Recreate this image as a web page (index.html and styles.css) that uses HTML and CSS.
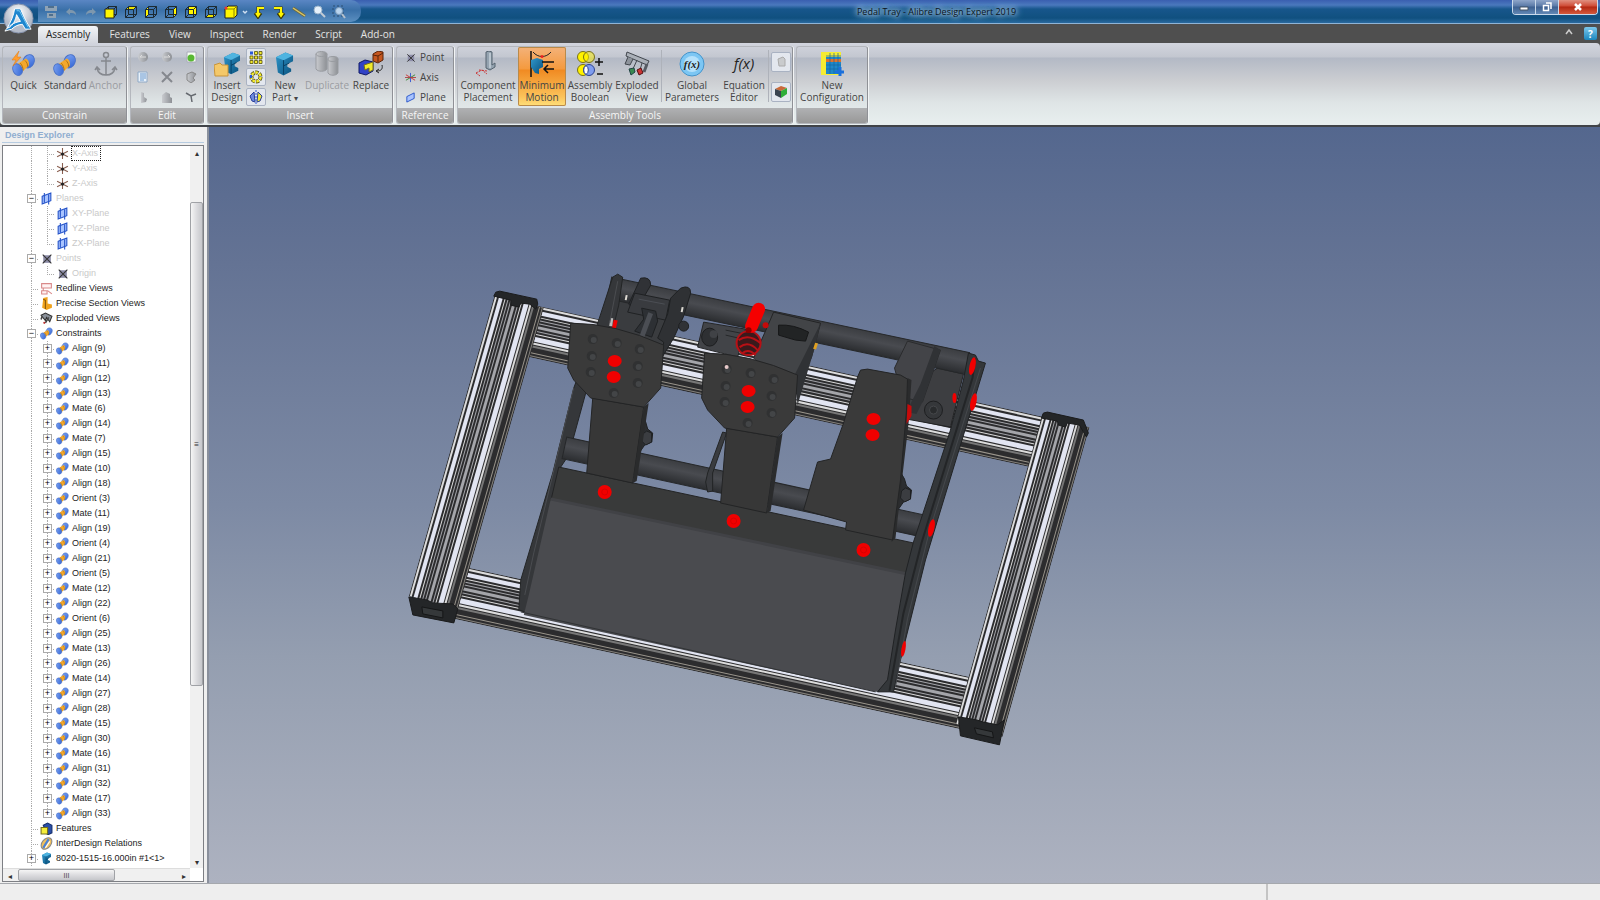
FILE: index.html
```html
<!DOCTYPE html>
<html lang="en">
<head>
  <meta charset="UTF-8" />
  <meta name="viewport" content="width=device-width, initial-scale=1.0" />
  <title>Pedal Tray - Alibre Design Expert 2019</title>
  <link rel="stylesheet" href="styles.css">
</head>
<body>
  <!-- shared icons -->
  <svg class="sprite" aria-hidden="true">
    <defs>
      <linearGradient id="grey" x1="0" y1="0" x2="1" y2="0"><stop offset="0" stop-color="#c9cbcf"/><stop offset="1" stop-color="#8d9095"/></linearGradient>
      <linearGradient id="blueDisc" x1="0" y1="0" x2="1" y2="1"><stop offset="0" stop-color="#7fa6f5"/><stop offset="1" stop-color="#2f62d2"/></linearGradient>
      <linearGradient id="steel" x1="0" y1="0" x2="1" y2="1"><stop offset="0" stop-color="#2f97cc"/><stop offset="1" stop-color="#09507c"/></linearGradient>
    </defs>
    <symbol id="cube" viewBox="0 0 14 14"><path d="M1.5 4.5h8v8h-8zM4.500 1.500h8v8h-8zM1.500 4.500l3-3M9.500 4.500l3-3M9.500 12.500l3-3M1.500 12.500l3-3" fill="none" stroke="#1c2a33"/></symbol>
    <symbol id="spool" viewBox="0 0 26 26">
      <ellipse cx="18" cy="9" rx="6" ry="7.500" fill="url(#blueDisc)" stroke="#4a72c8" transform="rotate(25 18 9)"/>
      <path d="M6 12l9-6c3 1 4 5 3 8l-8 7c-3 0-5-5-4-9z" fill="#f3a82c"/><path d="M9 11c2 2 3 5 3 8M14 8c2 2 3 4 3 7" stroke="#a96e12" fill="none"/>
      <ellipse cx="6" cy="18" rx="5" ry="6.500" fill="url(#blueDisc)" stroke="#4a72c8" transform="rotate(-25 6 18)"/>
    </symbol>
    <symbol id="bracket" viewBox="0 0 20 26"><path d="M1 6l10-5 8 3v6l-6 3v3l4 2v3l-8 4-6-3z" fill="url(#steel)"/><path d="M1 6l8 3 10-5-8-3z" fill="#4fb4e0"/><path d="M9 9v15M9 15l6-3" stroke="#063e63" fill="none"/></symbol>
    <symbol id="axis" viewBox="0 0 12 12"><path d="M6 1v10M1 4l10 5M1 9l10-5" stroke="#8a5f50" fill="none"/><circle cx="6" cy="6.500" r="1.500" fill="#222"/></symbol>
    <symbol id="plane" viewBox="0 0 12 12"><path d="M2 4l8-3v7l-8 3z" fill="#a9c4ff" stroke="#2452c8"/><path d="M4 1v9M8 2v9.500" stroke="#2452c8"/></symbol>
    <symbol id="point" viewBox="0 0 12 12"><rect x="3" y="3" width="7" height="7" fill="#8c8ca8"/><path d="M2.500 2.500l8 8M10.500 2.500l-8 8" stroke="#333"/></symbol>
    <symbol id="redline" viewBox="0 0 12 12"><path d="M1.500 1.500h9v4h-9zM3 5.500v3M1.500 8h5v3h-5zM7 8l4 3" fill="#fff3f3" stroke="#d98a8a"/></symbol>
    <symbol id="section" viewBox="0 0 12 12"><path d="M3 1l4-1v6l4 1v3l-5 2-4-2z" fill="#f0a31d"/><path d="M3 2l2 1v8" stroke="#8a5a0a" fill="none"/></symbol>
    <symbol id="explode" viewBox="0 0 12 12"><path d="M1 3l4-2 6 3-2 5-3-4-1 3z" fill="#8a9099" stroke="#333"/><path d="M2 4l-1 3M8 5l-3 5" stroke="#444" stroke-width="1.500"/><circle cx="4" cy="10" r="1" fill="#b33"/></symbol>
    <symbol id="feat" viewBox="0 0 12 12"><path d="M3 3l4-2 4 2v7l-4 2z" fill="#2a4fa8" stroke="#16306e"/><path d="M1 5h6v6H1z" fill="#f5ee3a" stroke="#77701a"/></symbol>
    <symbol id="inter" viewBox="0 0 12 12"><ellipse cx="6" cy="6" rx="6" ry="4" transform="rotate(-50 6 6)" fill="#f2c05a" stroke="#888"/><path d="M3 10L8 2" stroke="#4a82d8" stroke-width="2"/><path d="M5 10l4-6" stroke="#fff"/></symbol>
  </svg>

  <header class="titlebar">
    <div class="quick-access">
      <button aria-label="Save"><svg viewBox="0 0 14 14"><path d="M1 1h12v5H1zM3 8h9v5H3z" fill="#8fa3b5"/><path d="M4 2h6M5 10h4" stroke="#4e6f8e" stroke-width="2"/></svg></button>
      <button aria-label="Undo"><svg viewBox="0 0 14 14"><path d="M2 7l4-4v2c4 0 6 2 6 5-2-2-3-2-6-2v2z" fill="#7d97ae"/></svg></button>
      <button aria-label="Redo"><svg viewBox="0 0 14 14"><path d="M12 7L8 3v2c-4 0-6 2-6 5 2-2 3-2 6-2v2z" fill="#7d97ae"/></svg></button>
      <button aria-label="Front"><svg viewBox="0 0 14 14"><use href="#cube"/><path d="M1 4h9v9H1z" fill="#fff600" stroke="#222"/></svg></button>
      <button aria-label="Top"><svg viewBox="0 0 14 14"><path d="M1.500 4.500l3-3h8l-3 3z" fill="#e9e200"/><use href="#cube"/></svg></button>
      <button aria-label="Left"><svg viewBox="0 0 14 14"><path d="M1.500 4.500l3-3v8l-3 3z" fill="#fff600"/><use href="#cube"/></svg></button>
      <button aria-label="Right"><svg viewBox="0 0 14 14"><path d="M9.500 4.500l3-3v8l-3 3z" fill="#fff600"/><use href="#cube"/></svg></button>
      <button aria-label="Back"><svg viewBox="0 0 14 14"><path d="M4.500 1.500h8v8h-8z" fill="#fff600"/><use href="#cube"/></svg></button>
      <button aria-label="Bottom"><svg viewBox="0 0 14 14"><path d="M1.500 12.500l3-3h8l-3 3z" fill="#e9e200"/><use href="#cube"/></svg></button>
      <button aria-label="Isometric"><svg viewBox="0 0 14 14"><path d="M1 4l3-3h9v9l-3 3H1z" fill="#fff600" stroke="#222"/><path d="M1 4h9v9M10 4l3-3" stroke="#8a8500" fill="none"/><circle cx="2" cy="3" r="1.500" fill="#e33"/></svg></button>
      <button class="tiny" aria-label="More views"><svg viewBox="0 0 8 14"><path d="M2 6l2 2 2-2" stroke="#cfe0f2" fill="none" stroke-width="1.500"/></svg></button>
      <button aria-label="Previous view"><svg viewBox="0 0 14 14"><path d="M12 3H6v7M3 8l3 4 3-4" stroke="#3a3600" stroke-width="3" fill="none"/><path d="M12 3H6v7M4 8l2 3 2-3" stroke="#fff600" stroke-width="2" fill="none"/></svg></button>
      <button aria-label="Next view"><svg viewBox="0 0 14 14"><path d="M2 3h7v7M6 8l3 4 3-4" stroke="#3a3600" stroke-width="3" fill="none"/><path d="M2 3h7v7M7 8l2 3 2-3" stroke="#fff600" stroke-width="2" fill="none"/></svg></button>
      <button aria-label="Measure"><svg viewBox="0 0 14 14"><path d="M1 3l12 8" stroke="#6f6a3a" stroke-width="3"/><path d="M1 3l12 8" stroke="#d9c66a" stroke-width="1.500"/></svg></button>
      <button aria-label="Zoom"><svg viewBox="0 0 14 14"><circle cx="6" cy="5" r="4" fill="#e6f1fb" stroke="#9ab3ca"/><path d="M9 8l4 4" stroke="#c3cbd4" stroke-width="2"/></svg></button>
      <button aria-label="Zoom to window"><svg viewBox="0 0 14 14"><path d="M1 1h10v10H1z" stroke="#2c4f70" stroke-dasharray="2" fill="none"/><circle cx="7" cy="6" r="3.500" fill="#b9d4ee" stroke="#7f9fbe"/><path d="M10 9l3 4" stroke="#b5c0cb" stroke-width="2"/></svg></button>
    </div>
    <div class="title">Pedal Tray - Alibre Design Expert 2019</div>
    <div class="window-buttons">
      <button aria-label="Minimize"><svg viewBox="0 0 12 12"><path d="M2 6h8v3H2z" fill="#fff" stroke="#456"/></svg></button>
      <button aria-label="Restore"><svg viewBox="0 0 12 12"><path d="M5 2h5v6M2.500 4.500h5v5h-5z" fill="none" stroke="#fff" stroke-width="1.500"/></svg></button>
      <button class="close" aria-label="Close"><svg viewBox="0 0 12 12"><path d="M3 3l6 6M9 3L3 9" stroke="#fff" stroke-width="2.500"/></svg></button>
    </div>
    <button class="app-button" aria-label="Application menu"><svg viewBox="0 0 32 32">
      <defs><radialGradient id="orb" cy=".3"><stop offset="0" stop-color="#fff"/><stop offset="1" stop-color="#b4bbc9"/></radialGradient></defs>
      <circle cx="16" cy="16" r="15" fill="url(#orb)" stroke="#8592ab"/>
      <path d="M12 6h6c3 7 6 14 11 21h-6l-3-5c-4 0-8 2-11 5l-7 2c3-5 9-9 16-10L14 12c-1 6-4 11-7 13l-3 1c4-6 7-13 8-20z" fill="#1e86cf" stroke="#fff" stroke-width="1"/>
      <path d="M14 8h3l9 17" stroke="#7ccaf2" fill="none"/>
    </svg></button>
  </header>

  <nav class="tabs">
    <button class="active">Assembly</button>
    <button>Features</button>
    <button>View</button>
    <button>Inspect</button>
    <button>Render</button>
    <button>Script</button>
    <button>Add-on</button>
    <span class="spacer"></span>
    <button class="collapse" aria-label="Collapse ribbon"><svg viewBox="0 0 12 12"><path d="M3 8l3-4 3 4" stroke="#ccc" stroke-width="1.500" fill="none"/></svg></button>
    <button class="help" aria-label="Help">?</button>
  </nav>

  <div class="ribbon">
    <section class="group constrain">
      <div class="tools">
        <button class="tool"><svg viewBox="0 0 26 26"><use href="#spool" y="2" width="26" height="24"/><path d="M8 0L1 9h4l-3 6 8-9H6z" fill="#ff9d2e" stroke="#e07a10" stroke-width=".5"/></svg>Quick</button>
        <button class="tool"><svg viewBox="0 0 26 26"><use href="#spool" y="2" width="26" height="24"/></svg>Standard</button>
        <button class="tool off"><svg viewBox="0 0 26 26"><circle cx="13" cy="4" r="2.500" fill="none" stroke="#85888e" stroke-width="1.500"/><path d="M13 6v18M8 10h10M4 17c1 5 5 7 9 7s8-2 9-7M2 19l2-3 3 3M19 19l3-3 2 3" stroke="#85888e" stroke-width="1.500" fill="none"/></svg>Anchor</button>
      </div>
      <h2>Constrain</h2>
    </section>

    <section class="group">
      <div class="tools edit-grid">
        <button aria-label="Undo"><svg viewBox="0 0 12 12"><circle cx="6" cy="6" r="5" fill="url(#grey)"/><path d="M3 6h6M3 6l2-2" stroke="#ddd" fill="none"/></svg></button>
        <button aria-label="Redo"><svg viewBox="0 0 12 12"><circle cx="6" cy="6" r="5" fill="url(#grey)"/><path d="M3 6h6M9 6L7 4" stroke="#ddd" fill="none"/></svg></button>
        <button aria-label="Regenerate"><svg viewBox="0 0 12 12"><path d="M2 1h9v10H2z" fill="#f5fff0" stroke="#aab"/><circle cx="6" cy="7" r="3.500" fill="#58b832"/></svg></button>
        <button aria-label="Properties"><svg viewBox="0 0 12 12"><path d="M1 1h9v10H1z" fill="#e9f2fb" stroke="#8fa9c6"/><path d="M3 3h6M3 5h6M3 7h6M3 9h4" stroke="#6a98cc"/></svg></button>
        <button aria-label="Delete"><svg viewBox="0 0 12 12"><path d="M1 1l10 10M11 1L1 11" stroke="#85888e" stroke-width="2"/></svg></button>
        <button aria-label="Edit part"><svg viewBox="0 0 12 12"><path d="M2 3l5-2 4 2-3 4 2 2-4 3-4-3z" fill="url(#grey)" stroke="#888"/></svg></button>
        <button aria-label="Suppress"><svg viewBox="0 0 12 12"><path d="M4 1l3 1v4l3 2-1 3-5 1z" fill="url(#grey)"/></svg></button>
        <button aria-label="Copy"><svg viewBox="0 0 12 12"><path d="M1 4l4-3 4 2v3l2 1v5H1z" fill="url(#grey)"/></svg></button>
        <button aria-label="Branch"><svg viewBox="0 0 12 12"><path d="M1 2l5 3 5-2M6 5l1 6" stroke="#666a70" fill="none" stroke-width="1.500"/></svg></button>
      </div>
      <h2>Edit</h2>
    </section>

    <section class="group insert">
      <div class="tools">
        <button class="tool"><svg viewBox="0 0 26 26"><use href="#bracket" x="9" y="0" width="18" height="25"/><path d="M0 14l6-2 2 2h6v11H1z" fill="#f4c869" stroke="#c8943a"/></svg>Insert<br>Design</button>
        <div class="stack">
          <button aria-label="Linear pattern"><svg viewBox="0 0 14 14"><g fill="#f3ea2e" stroke="#55500f" stroke-width=".8"><path d="M5.500 1.500h3v3h-3zM10 1.500h3v3h-3zM1 6h3v3H1zM5.500 6h3v3h-3zM10 6h3v3h-3zM1 10.500h3v3H1zM5.500 10.500h3v3h-3zM10 10.500h3v3h-3z"/></g><path d="M1 1.500h3v3H1z" fill="#2a57d8"/></svg></button>
          <button aria-label="Circular pattern"><svg viewBox="0 0 14 14"><circle cx="7" cy="7" r="4.500" stroke="#55500f" stroke-width="4" stroke-dasharray="3 1" fill="none"/><circle cx="7" cy="7" r="4.500" stroke="#f3ea2e" stroke-width="2.500" stroke-dasharray="2.500 1.500" fill="none"/><path d="M1 5h2v3H1z" fill="#2a57d8"/></svg></button>
          <button aria-label="Mirror"><svg viewBox="0 0 14 14"><path d="M5 2L1 6l2 5 3 1z" fill="#6d8be0" stroke="#2a3f96"/><path d="M9 2l4 4-2 5-3 1z" fill="#f3ea2e" stroke="#2a3f96"/><path d="M7 0v14" stroke="#2a57d8" stroke-dasharray="2 1"/></svg></button>
        </div>
        <button class="tool"><svg viewBox="0 0 26 26"><use href="#bracket" x="3" width="19" height="26"/></svg>New<br>Part <i>▾</i></button>
        <button class="tool duplicate off"><svg viewBox="0 0 26 26"><g fill="url(#grey)" stroke="#999ca1"><path d="M2 3v15c2 3 9 3 11 0V3z"/><ellipse cx="7.500" cy="3" rx="5.500" ry="2.500"/><path d="M14 8v14c2 3 8 3 10 0V8z"/><ellipse cx="19" cy="8" rx="5" ry="2.500"/></g></svg>Duplicate</button>
        <button class="tool replace"><svg viewBox="0 0 26 26"><path d="M15 3l5-3 5 1v8l-5 3-5-2z" fill="#c4561f" stroke="#5a240a"/><path d="M15 4l5 1 5-3M20 5v6" stroke="#5a240a" fill="none"/><path d="M1 12l6-3 8 2v9l-7 4-7-2z" fill="#3142c6" stroke="#111a66"/><path d="M6 14l9-3v8l-4 2v-4l-4 2z" fill="#f1ea2c" stroke="#77701a"/><path d="M24 14c1 4-1 6-5 6m2-2l-3 2 3 2" stroke="#222" fill="none"/></svg>Replace</button>
      </div>
      <h2>Insert</h2>
    </section>

    <section class="group reference">
      <div class="tools rows">
        <button><svg viewBox="0 0 12 12"><use href="#point"/></svg>Point</button>
        <button><svg viewBox="0 0 12 12"><path d="M6 1v10" stroke="#3456d0"/><path d="M1 3l10 6" stroke="#c33"/><path d="M1 9l10-6" stroke="#383"/><path d="M0 6h12" stroke="#a44"/></svg>Axis</button>
        <button><svg viewBox="0 0 12 12"><path d="M2 5l8-4v6l-8 4z" fill="#a9c4ff" stroke="#2452c8"/></svg>Plane</button>
      </div>
      <h2>Reference</h2>
    </section>

    <section class="group assembly">
      <div class="tools">
        <button class="tool wide"><svg viewBox="0 0 26 26"><path d="M11 1l3-1 3 1v13l3-2v4l-5 3-4-2z" fill="#94a3b0" stroke="#55636f"/><path d="M15 2v15" stroke="#dfe7ee"/><path d="M1 22l6-3 5 4M5 25l-4-3M4 19l8 1" stroke="#c33" fill="none" stroke-dasharray="2 1"/></svg>Component<br>Placement</button>
        <button class="tool active" aria-pressed="true"><svg viewBox="0 0 26 26"><path d="M2 0v26" stroke="#111" stroke-width="1.500"/><path d="M4 1c5 6 13 6 18 0" stroke="#222" fill="none"/><circle cx="13" cy="5.500" r="1.500" fill="#e22"/><path d="M2 9l6-2 6 2v7l-4 2v5l-4-1-4-6z" fill="url(#steel)"/><path d="M13 11h12M15 18h10M19 14l-4 4 4 4" stroke="#111" stroke-width="1.500" fill="none"/></svg>Minimum<br>Motion</button>
        <button class="tool"><svg viewBox="0 0 26 26"><g stroke="#77701a" fill="#fff200"><circle cx="6" cy="6" r="5.500"/><circle cx="12" cy="6" r="5.500" fill-opacity=".5"/><circle cx="6" cy="19" r="5.500"/></g><circle cx="12" cy="19" r="5.500" fill="#7f9df0" stroke="#2c4390"/><path d="M9 14.500a5.500 5.500 0 0 1 0 9 5.500 5.500 0 0 1 0-9" fill="#fff" stroke="#2c4390"/><path d="M22 7v8M18 11h8M20 23h6" stroke="#111" stroke-width="1.500"/></svg>Assembly<br>Boolean</button>
        <button class="tool exploded"><svg viewBox="0 0 26 26"><path d="M3 1l22 9-2 4L2 5z" fill="#aab0b8" stroke="#41464d"/><path d="M4 6l-3 7 5 1 3-6M13 9l-4 9M18 12l-2 7" stroke="#41464d" fill="#8d939b"/><path d="M23 13l-3 8" stroke="#565b63" stroke-width="3"/><path d="M5 18l5-1 1 4-4 3z" fill="#3a8a50" stroke="#244"/><path d="M13 19l4-2 2 5-4 2z" fill="#c33" stroke="#511"/></svg>Exploded<br>View</button>
        <span class="divider"></span>
        <button class="tool global"><svg viewBox="0 0 26 26"><circle cx="13" cy="13" r="12" fill="#7cc6f3" stroke="#4593c9"/><circle cx="13" cy="13" r="8" fill="#b5e1fb"/><text x="13" y="17" class="fx-small">f(x)</text></svg>Global<br>Parameters</button>
        <button class="tool equation"><svg viewBox="0 0 26 26"><text x="13" y="18" class="fx">f(x)</text></svg>Equation<br>Editor</button>
        <span class="divider"></span>
        <div class="stack two">
          <button aria-label="Compare"><svg viewBox="0 0 14 14"><path d="M4 4l5-2 2 2v7H5z" fill="#c9cbcd" stroke="#aaa"/></svg></button>
          <button aria-label="Interference"><svg viewBox="0 0 14 14"><path d="M1 4l6-3 6 2-6 3z" fill="#c96a3a"/><path d="M1 4l6 2v7l-6-3z" fill="#3a4450"/><path d="M7 6l6-3v6l-6 4z" fill="#2fae3a"/></svg></button>
        </div>
      </div>
      <h2>Assembly Tools</h2>
    </section>

    <section class="group config">
      <div class="tools">
        <button class="tool"><svg viewBox="0 0 26 26"><path d="M2 1h20v23H2z" fill="#f6ec32"/><path d="M7 6h15v17H7z" fill="#1e88c9"/><path d="M7 8h15v3H7z" fill="#e0722c"/><path d="M7 14h15M7 18h15M11 2v21M15 2v21M19 2v21M7 5h15" stroke="#1565a0" stroke-width=".7"/><path d="M21 16v9M16 21h9" stroke="#1a70dc" stroke-width="3"/></svg>New<br>Configuration</button>
      </div>
      <h2>&nbsp;</h2>
    </section>
  </div>

  <main>
    <aside>
      <h1>Design Explorer</h1>
      <div class="explorer">
        <div class="tree" id="tree"></div>
        <div class="vscroll">
          <button aria-label="Scroll up">▴</button>
          <span class="vthumb">≡</span>
          <button aria-label="Scroll down">▾</button>
        </div>
        <div class="hscroll">
          <button aria-label="Scroll left">◂</button>
          <span class="hthumb">III</span>
          <button aria-label="Scroll right">▸</button>
        </div>
      </div>
    </aside>

    <div class="viewport">
      <svg viewBox="208 127 1392 756" role="img" aria-label="Pedal tray assembly">
        <defs>
          <linearGradient id="tube" x1="0" y1="0" x2="0" y2="1"><stop offset="0" stop-color="#3b3d41"/><stop offset=".4" stop-color="#494b50"/><stop offset="1" stop-color="#2b2d30"/></linearGradient>
          <g id="hole"><ellipse rx="5" ry="5" fill="#303132"/><ellipse cx="1" cy="1" rx="3" ry="3" fill="#434547"/></g>
          <g id="pad">
            <path d="M592 398l51 9-11 76-46-10z" fill="#373737" stroke="#232425"/>
            <path d="M643 407l5-4-12 78-4 2z" fill="#2a2b2c"/>
            <path d="M570 323q44 0 93 22l-3 43-17 19-53-9-17-18-6-12z" fill="#3a3a3a" stroke="#232425"/>
            <use href="#hole" x="592" y="339"/><use href="#hole" x="616" y="343"/><use href="#hole" x="639" y="349"/>
            <use href="#hole" x="591" y="356"/><use href="#hole" x="637" y="366"/><use href="#hole" x="590" y="372"/>
            <use href="#hole" x="637" y="383"/><use href="#hole" x="613" y="393"/>
            <ellipse cx="614" cy="361" rx="7" ry="6" fill="#f00000"/><ellipse cx="613" cy="377" rx="7" ry="6" fill="#f00000"/>
          </g>
          <g id="knob" fill="#2c2e31" stroke="#1e2022"><path d="M-4-22l4 7 2 7 5 4-1 9-7 3-7 10-2-14z"/><path d="M1-6l5 2 0 9-6 3-4-4 1-7z" fill="#3b3d41"/></g>
        </defs>
        <!-- extrusion profile: light face, then the shaded side -->
        <symbol id="rail" viewBox="0 0 52 100" preserveAspectRatio="none">
          <rect width="52" height="100" fill="#2c2c2e"/>
          <g fill="#dcdcdc">
            <rect x="1" width="2" height="100"/><rect x="11" width="1" height="100"/><rect x="28" width="1" height="100"/><rect x="37" width="2" height="100"/>
          </g>
          <g fill="#e2e5f2"><rect x="5" width="4" height="100"/><rect x="31" width="5" height="100"/></g>
          <g fill="#a4a5aa">
            <rect x="14" width="1" height="100"/><rect x="17" width="1" height="100"/><rect x="20" width="3" height="100"/><rect x="25" width="1" height="100"/>
          </g>
          <rect x="40" width="2" height="100" fill="#777"/>
          <rect x="47" width="1" height="100" fill="#9a958c"/><rect x="50" width="1" height="100" fill="#85827c"/>
        </symbol>

        <!-- frame -->
        <use href="#rail" width="52" height="534" transform="translate(530 304) rotate(12.400) matrix(0 1 1 0 0 0)"/>
        <use href="#rail" width="53" height="530" transform="translate(455 565) rotate(12.300) matrix(0 1 1 0 0 0)"/>
        <use href="#rail" width="51" height="314" transform="translate(494 294) rotate(15.900)"/>
        <use href="#rail" width="49" height="322" transform="translate(1042 414) rotate(15.700)"/>
        <g fill="#242628" stroke="#1a1b1c">
          <path d="M495 292l4-1 37 8 1 5-2 5-6-5-9-1-2 4-8-2 0-5-17-4z"/>
          <path d="M1043 413l4-1 36 8 5 13-2 4-7-12-12-2-2 4-7-2-1-4-16-3z"/>
          <path d="M408 597l18 3 6 3 20 1 5 5-4 14-41-8z"/>
          <path d="M958 717l18 3 6 2 15 3 7-5-5 25-39-9z"/>
        </g>
        <path d="M421 607l21 4v7l-20-4zM974 728l18 4 1 6-17-4z" fill="#35383a" stroke="#151617"/>

        <!-- rear tube and brackets -->
        <path d="M937 368l26 6-13 53-44-8 0-30z" fill="#3d3e41" stroke="#232425"/>
        <circle cx="933" cy="410" r="9" fill="#35373a" stroke="#1d1e20"/><circle cx="933" cy="410" r="4" fill="#292b2d" stroke="#45474a"/>
        <path d="M612 290l70 16-20 40-62-20z" fill="#3a3c3f"/>
        <g transform="translate(611 277) rotate(11.900)"><rect width="366" height="22" fill="url(#tube)" stroke="#26282a"/></g>
        <path d="M907 341l33 9-18 52-20-5-8-29z" fill="#434448" stroke="#2a2b2d"/>
        <path d="M940 350l-18 52-6 12-10-2 14-28 14-38z" fill="#303235"/>
        <path d="M773 312l47 11-9 34-18 40-40-39 14-32z" fill="#424447" stroke="#232425"/>
        <path d="M778 325q15-1 30 7l-3 9-10-1-17-5z" fill="#222425" stroke="#161718"/>
        <path d="M820 323l-5 22-18 60-3-30z" fill="#303235"/>
        <path d="M816 343l-2 6" stroke="#e0a020" stroke-width="3"/>
        <path d="M703 322l42 7-8 28-40-10z" fill="#424448" stroke="#232425"/>
        <path d="M725 330l15 3M725 335l13 3" stroke="#252729"/>
        <ellipse cx="709" cy="337" rx="8" ry="9" fill="#2e3033" stroke="#1c1d1f"/><circle cx="713" cy="334" r="4" fill="#404246"/>

        <!-- clutch cylinder -->
        <path d="M640 278q10-2 10 7l-8 14-8 10-6-5z" fill="#303236" stroke="#1f2123"/>
        <path d="M634 293l35 7-4 20-38-8z" fill="#393b3f" stroke="#1f2123"/>
        <path d="M638 299l26 5" stroke="#4b4e54"/>
        <path d="M641 308l14 3 2 10-6 16-17-6 9-12z" fill="#2d3034" stroke="#1e2022"/>
        <path d="M650 313l-9 24" stroke="#4b4e54" stroke-width="5"/>
        <path d="M680 288q10-4 10 5l-7 23-10 22-12 20 2-16-6-4 10-24 3-16z" fill="#2f3134" stroke="#1e2022"/>
        <circle cx="683" cy="326" r="5" fill="#303236" stroke="#1e2022"/>
        <path d="M626 295l-1 5M682 307l-1 5" stroke="#dedbd4" stroke-width="2"/>

        <!-- side arm, left -->
        <path d="M612 277l5-3 5 3-4 28-6 25-27 63-17 62-10 15-2 20-31 122-7-2 2-30 32-107 21-85 24-65z" fill="#35373a" stroke="#222425"/>
        <path d="M615 320l-2 9" stroke="#f00000" stroke-width="4"/><path d="M611 318l-1 8" stroke="#bbb" stroke-width="3"/>
        <path d="M617 281l-8 42M573 388l-40 165-9 42" stroke="#4a4c50" fill="none"/>

        <!-- pivot tube -->
        <g transform="translate(566 437) rotate(12.300)"><rect width="367" height="22" fill="url(#tube)" stroke="#26282a"/></g>
        <path d="M722 432l4 1-14 40 0 18-5 1-2-10 2-9z" fill="#3a3c40" stroke="#222425"/>

        <!-- tray -->
        <path d="M558 467l355 76-6 32-357-74z" fill="#393a3a" stroke="#232425"/>
        <path d="M550 499l357 75-7 30-13 88-12 0-352-77 5-20z" fill="#4a4b4f"/>
        <path d="M550 499l357 75" stroke="#414246" stroke-width="3"/>
        <path d="M520 612l355 80" stroke="#303234" fill="none"/>

        <!-- side arm, right -->
        <path d="M968 353l7 2 3 6 7 2-50 164-10 33-25 100-7 32-16 0 10-12 8-50 10-57 8-31 37-112 13-50z" fill="#34373a" stroke="#202224"/>
        <path d="M975 358l-3 20-51 165-18 70-14 78" stroke="#232527" fill="none" stroke-width="2"/>
        <path d="M980 368l-51 163-22 88-12 68" stroke="#45484c" fill="none"/>

        <use href="#knob" x="645" y="437"/><use href="#knob" x="904" y="494"/>
        <!-- brake spring -->
        <ellipse cx="748" cy="343" rx="12" ry="12" fill="#3a1a1c" stroke="#b81015" stroke-width="2"/>
        <path d="M738 340q10-7 22 3M739 347q9-7 18 3M742 353q6-5 13 2" stroke="#b81015" fill="none" stroke-width="2"/>
        <path d="M758 309l-7 17" stroke="#f50000" stroke-width="13" stroke-linecap="round"/><circle cx="748" cy="330" r="3" fill="#8c0000"/>
        <circle cx="765" cy="325" r="3" fill="#c50a0a"/>

        <!-- pedals -->
        <use href="#pad"/>
        <use href="#pad" x="134" y="30"/>
        <path d="M907 378l4 2-3 44-7 60-6 54-4 4 8-60z" fill="#2a2b2c"/>
        <path d="M860 370l7-1 33 6 7 4-1 31-6 70-8 60-47-10 1-8-43-12 14-48 13-3 13-36 14-46z" fill="#3a3a3a" stroke="#232425"/>
        <circle cx="726" cy="367" r="2" fill="#e7c9c9"/>
        <g fill="#f00000">
          <ellipse cx="873" cy="419" rx="7" ry="6"/><ellipse cx="872" cy="435" rx="7" ry="6"/>
          <circle cx="604" cy="492" r="7"/><circle cx="733" cy="521" r="7"/><circle cx="863" cy="550" r="7"/>
          <ellipse cx="972" cy="366" rx="3" ry="9" transform="rotate(12 972 366)"/>
          <ellipse cx="973" cy="402" rx="3" ry="9" transform="rotate(12 973 402)"/>
          <ellipse cx="931" cy="528" rx="3" ry="9" transform="rotate(12 931 528)"/>
          <ellipse cx="903" cy="649" rx="2" ry="8" transform="rotate(10 903 649)"/>
          <ellipse cx="954" cy="398" rx="2" ry="5"/><path d="M907 404l4 2 0 10-5 8z" fill="#c80a0a"/>
        </g>
        <g fill="none" stroke="#d80000"><circle cx="604" cy="492" r="3"/><circle cx="733" cy="521" r="3"/><circle cx="863" cy="550" r="3"/></g>
      </svg>
    </div>
  </main>

  <footer>
    <span class="status-text"></span>
    <span class="status-units"></span>
  </footer>

  <script>
    const constraints = ['Align (9)', 'Align (11)', 'Align (12)', 'Align (13)', 'Mate (6)', 'Align (14)', 'Mate (7)', 'Align (15)',
      'Mate (10)', 'Align (18)', 'Orient (3)', 'Mate (11)', 'Align (19)', 'Orient (4)', 'Align (21)', 'Orient (5)', 'Mate (12)',
      'Align (22)', 'Orient (6)', 'Align (25)', 'Mate (13)', 'Align (26)', 'Mate (14)', 'Align (27)', 'Align (28)', 'Mate (15)',
      'Align (30)', 'Mate (16)', 'Align (31)', 'Align (32)', 'Mate (17)', 'Align (33)'];

    // [level, icon, text, expander, class]
    const rows = [
      [2, 'axis', 'X-Axis', '', 'hidden-item focused'],
      [2, 'axis', 'Y-Axis', '', 'hidden-item'],
      [2, 'axis', 'Z-Axis', '', 'hidden-item last'],
      [1, 'plane', 'Planes', '-', 'hidden-item'],
      [2, 'plane', 'XY-Plane', '', 'hidden-item'],
      [2, 'plane', 'YZ-Plane', '', 'hidden-item'],
      [2, 'plane', 'ZX-Plane', '', 'hidden-item last'],
      [1, 'point', 'Points', '-', 'hidden-item'],
      [2, 'point', 'Origin', '', 'hidden-item last'],
      [1, 'redline', 'Redline Views', '', ''],
      [1, 'section', 'Precise Section Views', '', ''],
      [1, 'explode', 'Exploded Views', '', ''],
      [1, 'spool', 'Constraints', '-', ''],
      ...constraints.map((name, i) => [2, 'spool', name, '+', i === constraints.length - 1 ? 'last' : '']),
      [1, 'feat', 'Features', '', ''],
      [1, 'inter', 'InterDesign Relations', '', ''],
      [1, 'bracket', '8020-1515-16.000in #1<1>', '+', '']
    ];

    const tree = document.getElementById('tree');
    rows.forEach(([level, icon, text, expander, cls]) => {
      const row = document.createElement('div');
      row.className = 'row ' + cls;
      const guide = level === 2 ? '<span class="cell line"></span>' : '';
      const sign = expander ? `<button aria-label="Toggle">${expander === '+' ? '+' : '−'}</button>` : '';
      row.innerHTML = `${guide}<span class="cell line joint">${sign}</span>
        <svg class="icon"><use href="#${icon}"/></svg><span class="label"></span>`;
      row.querySelector('.label').textContent = text;
      tree.appendChild(row);
    });
  </script>
</body>
</html>
```
FILE: styles.css
```css
* {
  box-sizing: border-box;
}
body {
  margin: 0;
  height: 100vh;
  display: flex;
  flex-direction: column;
  overflow: hidden;
  font-family: "Open Sans", "Noto Sans", sans-serif;
  font-size: 10px;
  color: #444;
  background: #4f4f4f;
}
button {
  font: inherit;
  color: inherit;
  background: none;
  border: none;
  padding: 0;
  margin: 0;
}
h1, h2 {
  margin: 0;
}
.sprite {
  position: absolute;
  width: 0;
  height: 0;
}

/* title bar */
.titlebar {
  position: relative;
  z-index: 2;
  flex: none;
  height: 24px;
  display: flex;
  align-items: flex-start;
  background: linear-gradient(#3a5fb0, #4a78bd 5px, #17568c 9px, #10507f 18px, #2a6aa0);
  border-bottom: 1px solid #8fb4d6;
}
.quick-access {
  display: flex;
  align-items: center;
  height: 22px;
  margin-left: 38px;
  padding: 2px 12px 0 3px;
  border-radius: 0 10px 10px 0;
  background: linear-gradient(#5a86c4, #3a70a8 10px, #5b8fc0);
}
.quick-access button {
  width: 20px;
  height: 14px;
}
.quick-access .tiny {
  width: 8px;
}
.quick-access svg {
  display: block;
  width: 14px;
  height: 14px;
  margin: auto;
}
.quick-access .tiny svg {
  width: 8px;
}
.title {
  flex: 1;
  text-align: center;
  line-height: 23px;
  color: #0a1420;
  font-size: 9px;
  text-shadow: 0 0 4px #b9d3ec, 0 0 6px #a9c8e6, 0 0 8px #a9c8e6, 0 0 10px #8fb4dc;
}
.window-buttons {
  display: flex;
  height: 15px;
  margin-right: 2px;
  border: 1px solid #c9d9ea;
  border-top: none;
  border-radius: 0 0 4px 4px;
  overflow: hidden;
}
.window-buttons button {
  width: 23px;
  background: linear-gradient(#8fa6ca, #5c7ba8 6px, #3d6090 7px, #6288b5);
  border-right: 1px solid #c9d9ea;
}
.window-buttons .close {
  width: 38px;
  border-right: none;
  background: linear-gradient(#e09080, #cf4c36 6px, #b32812 7px, #d4593c);
}
.window-buttons svg {
  display: block;
  width: 12px;
  height: 12px;
  margin: auto;
}
.app-button {
  position: absolute;
  left: 3px;
  top: 3px;
}
.app-button svg {
  display: block;
  width: 31px;
  height: 31px;
}

/* tabs */
.tabs {
  flex: none;
  display: flex;
  align-items: flex-end;
  gap: 3px;
  height: 19px;
  padding-left: 38px;
  padding-right: 3px;
  background: #4f4f4f;
  color: #e4e4e4;
}
.tabs button {
  height: 17px;
  padding: 0 8px;
  line-height: 17px;
}
.tabs .active {
  background: linear-gradient(#f2f4f6, #d3d6de);
  border-radius: 3px 3px 0 0;
  color: #222;
}
.spacer {
  flex: 1;
}
.tabs .collapse {
  padding: 0;
  width: 12px;
}
.tabs .help {
  width: 13px;
  height: 13px;
  padding: 0;
  margin: 0 0 3px 6px;
  line-height: 12px;
  font-weight: bold;
  color: #fff;
  background: linear-gradient(#7cc8ec, #1b86bd);
  border-radius: 2px;
}

/* ribbon */
.ribbon {
  flex: none;
  display: flex;
  gap: 3px;
  height: 82px;
  padding: 3px 2px 1px;
  border-radius: 0 4px 4px 4px;
  background: linear-gradient(#d2d5de, #c3c7d0 14px, #b3b9c5 15px, #ccced2 38px, #dfe5e6 60px, #e8efef);
}
.group {
  display: flex;
  flex-direction: column;
  border: 1px solid #b4b7bd;
  border-right-color: #8f9196;
  border-radius: 3px;
  box-shadow: 1px 0 #f2f4f5;
  overflow: hidden;
}
.group h2 {
  height: 15px;
  line-height: 15px;
  font-size: 10px;
  font-weight: normal;
  text-align: center;
  color: #f6f6f6;
  background: linear-gradient(#b0b1b3, #989898);
}
.tools {
  flex: 1;
  display: flex;
  align-items: flex-start;
}
.tool {
  width: 48px;
  padding: 4px 0 3px;
  line-height: 12px;
  white-space: nowrap;
  text-align: center;
  border-radius: 2px;
}
.tool svg {
  display: block;
  width: 26px;
  height: 26px;
  margin: 0 auto 2px;
}
.constrain .tool {
  width: 41px;
}
.insert .tool {
  width: 38px;
}
.insert .duplicate {
  width: 46px;
}
.insert .replace {
  width: 42px;
}
.assembly .wide {
  width: 60px;
}
.assembly .exploded, .assembly .equation {
  width: 46px;
}
.assembly .global {
  width: 58px;
}
.config .tool {
  width: 70px;
}
.tool i {
  font-style: normal;
  font-size: 8px;
}
.tool.off {
  color: #9a9ca1;
}
.tool.active {
  background: linear-gradient(#f3b27a, #f59a3e 22px, #f08a22 23px, #fcc35a 50px, #ffe07a);
  box-shadow: inset 0 0 0 1px #b98a4a;
}
.edit-grid {
  display: grid;
  grid-template-columns: repeat(3, 24px);
  grid-template-rows: repeat(3, 20px);
}
.edit-grid button {
  height: 20px;
}
.edit-grid svg {
  display: block;
  width: 12px;
  height: 12px;
  margin: auto;
}
.stack {
  height: 60px;
  display: flex;
  flex-direction: column;
  justify-content: space-around;
}
.stack button {
  width: 20px;
  height: 18px;
  border: 1px solid #a9b2c2;
  border-radius: 2px;
  background: #e3e7ee;
}
.stack.two {
  margin: 0 1px;
}
.stack.two button {
  height: 20px;
}
.stack svg {
  display: block;
  width: 14px;
  height: 14px;
  margin: auto;
}
.rows {
  flex-direction: column;
  padding-left: 8px;
}
.rows button {
  display: flex;
  align-items: center;
  gap: 4px;
  height: 20px;
}
.rows svg {
  width: 11px;
  height: 11px;
}
.reference {
  width: 58px;
}
.divider {
  width: 1px;
  height: 52px;
  margin: 3px 1px 0;
  background: #aeb2ba;
}
.fx, .fx-small {
  font-family: "Open Sans", sans-serif;
  font-style: italic;
  font-size: 15px;
  text-anchor: middle;
  fill: #222;
}
.fx-small {
  font-family: "Liberation Serif", serif;
  font-size: 11px;
  font-weight: bold;
}

/* explorer */
main {
  flex: 1;
  min-height: 0;
  display: flex;
  border-top: 2px solid #404348;
}
aside {
  width: 209px;
  flex: none;
  display: flex;
  flex-direction: column;
  padding: 0 3px 1px 2px;
  background: #efefef;
  border-right: 2px solid #8a909c;
}
h1 {
  height: 16px;
  margin-bottom: 2px;
  padding-left: 3px;
  font: bold 9px/16px "Liberation Sans", sans-serif;
  color: #8fadd0;
  border-bottom: 1px solid #b6cbe0;
}
.explorer {
  flex: 1;
  min-height: 0;
  display: grid;
  grid-template-columns: 1fr 13px;
  grid-template-rows: 1fr 13px;
  border: 1px solid #7d7f84;
  background: #fff;
}
.tree {
  min-height: 0;
  overflow: hidden;
  padding-left: 20px;
  font-family: "Liberation Sans", sans-serif;
  font-size: 9px;
  color: #1c1c1c;
}
.row {
  display: flex;
  align-items: center;
  height: 15px;
  white-space: nowrap;
}
.cell {
  width: 16px;
  height: 15px;
  display: flex;
  align-items: center;
  justify-content: center;
  background: repeating-linear-gradient(#aaa 0 1px, transparent 1px 2px) 8px 0 / 1px 100% no-repeat;
}
.joint {
  background: repeating-linear-gradient(#aaa 0 1px, transparent 1px 2px) 8px 0 / 1px 100% no-repeat,
    repeating-linear-gradient(90deg, #aaa 0 1px, transparent 1px 2px) 8px 8px / 8px 1px no-repeat;
}
.last .joint {
  background-size: 1px 8px, 8px 1px;
}
.row button {
  width: 9px;
  height: 9px;
  margin-left: 1px;
  border: 1px solid #aaa;
  background: #fff;
  color: #000;
  font: 9px/7px "Liberation Sans", sans-serif;
}
.icon {
  width: 13px;
  height: 13px;
  margin: 0 3px 0 1px;
}
.label {
  line-height: 12px;
  padding-bottom: 1px;
}
.hidden-item .label {
  color: #c9c9c9;
}
.focused .label {
  padding-right: 2px;
  outline: 1px dotted #222;
}
.vscroll, .hscroll {
  display: flex;
  background: #f0f0f0;
  color: #333;
  font-size: 8px;
}
.vscroll {
  flex-direction: column;
}
.vscroll button, .hscroll button {
  width: 13px;
  height: 13px;
  line-height: 13px;
}
.vthumb, .hthumb {
  display: flex;
  align-items: center;
  justify-content: center;
  border: 1px solid #a0a2a6;
  border-radius: 2px;
}
.vthumb {
  margin: 43px 0 auto;
  height: 67%;
  background: linear-gradient(90deg, #f5f5f5, #dcdcdf 50%, #c6c7cb);
}
.hscroll {
  border-top: 1px solid #ddd;
}
.hthumb {
  width: 97px;
  margin-right: auto;
  margin-left: 2px;
  font-size: 7px;
  background: linear-gradient(#f5f5f5, #dcdcdf 50%, #c6c7cb);
}

/* model view */
.viewport {
  flex: 1;
  min-width: 0;
  background: linear-gradient(#54678e, #647394 18%, #7d8aa4 50%, #949eb0 70%, #adb2c0);
}
.viewport svg {
  display: block;
  width: 100%;
  height: 100%;
}

/* status bar */
footer {
  flex: none;
  display: flex;
  height: 17px;
  background: #eee;
  border-top: 1px solid #a5a8ad;
}
.status-text {
  flex: 1;
  border-right: 2px solid #c4c4c4;
}
.status-units {
  width: 332px;
}
```
